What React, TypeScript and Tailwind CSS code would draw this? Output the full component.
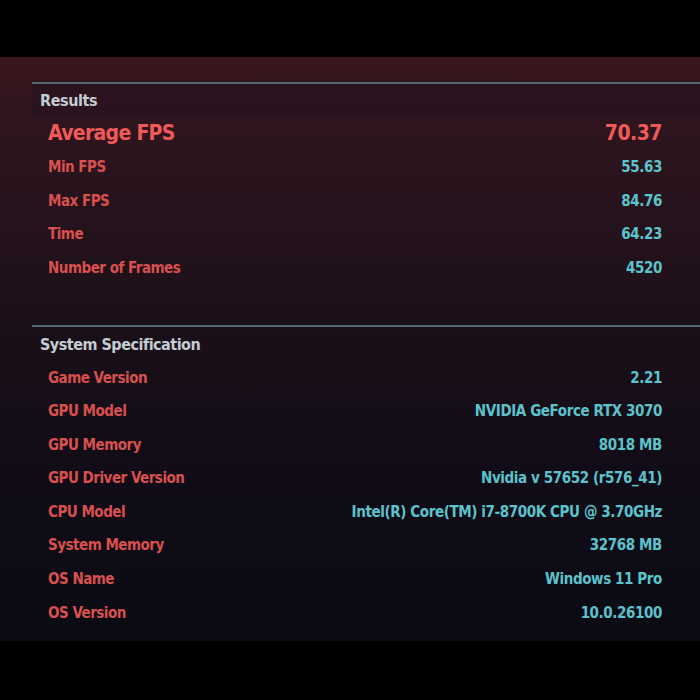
import React from "react";

const font = { fontFamily: '"DejaVu Sans Condensed", "DejaVu Sans", sans-serif' };

function Row({ label, value }: { label: string; value: string }) {
  return (
    <div className="flex h-[33.6px] items-center justify-between pl-[16px] pr-[38px]">
      <span className="text-[15px] font-semibold text-[#d9504e] tracking-[-0.5px]">{label}</span>
      <span className="text-[15px] font-semibold text-[#5cc3cc] tracking-[-0.4px]">{value}</span>
    </div>
  );
}

export default function App() {
  const results = [
    ["Min FPS", "55.63"],
    ["Max FPS", "84.76"],
    ["Time", "64.23"],
    ["Number of Frames", "4520"],
  ];
  const spec = [
    ["Game Version", "2.21"],
    ["GPU Model", "NVIDIA GeForce RTX 3070"],
    ["GPU Memory", "8018 MB"],
    ["GPU Driver Version", "Nvidia v 57652 (r576_41)"],
    ["CPU Model", "Intel(R) Core(TM) i7-8700K CPU @ 3.70GHz"],
    ["System Memory", "32768 MB"],
    ["OS Name", "Windows 11 Pro"],
    ["OS Version", "10.0.26100"],
  ];
  return (
    <div className="flex h-[700px] w-[700px] flex-col bg-black" style={font}>
      <div className="h-[57px] shrink-0 bg-black" />
      <div className="flex h-[584px] flex-col bg-[linear-gradient(180deg,#3b161b_0%,#30151e_8%,#24121c_30%,#1a0f18_48%,#110c17_70%,#0a0b14_100%)] pt-[25px] pl-[32px]">
        <div className="border-t-2 border-[#4d6b74]">
          <div className="flex h-[33px] items-center bg-[#261220]/60 pl-[8px]">
            <span className="text-[16px] font-semibold text-[#c3cdd2] tracking-[-0.4px]">Results</span>
          </div>
          <div className="flex h-[33.6px] items-center justify-between pl-[16px] pr-[38px]">
            <span className="text-[21px] font-semibold text-[#f05a58] tracking-[-0.7px]">Average FPS</span>
            <span className="text-[21px] font-semibold text-[#f05a58] tracking-[-0.5px]">70.37</span>
          </div>
          {results.map(([l, v]) => (
            <Row key={l} label={l} value={v} />
          ))}
        </div>
        <div className="mt-[40px] border-t-2 border-[#4d6b74]">
          <div className="flex h-[34px] items-center pl-[8px] pt-[2px]">
            <span className="text-[16px] font-semibold text-[#c3cdd2] tracking-[-0.5px]">System Specification</span>
          </div>
          {spec.map(([l, v]) => (
            <Row key={l} label={l} value={v} />
          ))}
        </div>
      </div>
      <div className="flex-1 bg-black" />
    </div>
  );
}
